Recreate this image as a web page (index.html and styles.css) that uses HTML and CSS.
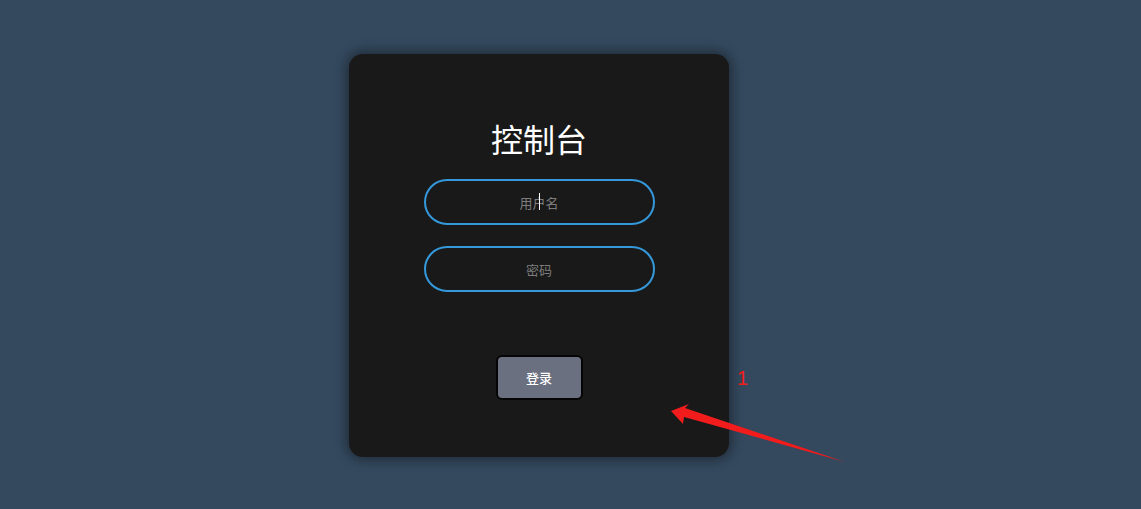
FILE: index.html
```html
<!DOCTYPE html>
<html lang="zh">
<head>
<meta charset="utf-8">
<title>控制台</title>
<link rel="stylesheet" href="styles.css">
</head>
<body>
<div class="page">
  <form class="card">
    <h1 class="title">控制台</h1>
    <div class="field">
      <input class="input" type="text" placeholder="用户名">
      <span class="caret"></span>
    </div>
    <div class="field">
      <input class="input" type="password" placeholder="密码">
    </div>
    <button class="btn" type="button">登录</button>
  </form>
  <span class="note">1</span>
  <svg class="arrow" width="200" height="80" viewBox="0 0 200 80">
    <polygon points="1,19 19,12 15,16 175,70 14,25 13,32" fill="#f21c1c"/>
  </svg>
</div>
</body>
</html>
```

FILE: styles.css
```css
html, body {
  margin: 0;
  padding: 0;
  height: 100%;
}
body {
  background: #34495e;
  font-family: "Noto Sans CJK SC", "Noto Sans", sans-serif;
  overflow: hidden;
}
.page {
  position: relative;
  height: 100%;
  padding: 54px 0 0 349px;
  box-sizing: border-box;
}
.card {
  width: 380px;
  height: 403px;
  box-sizing: border-box;
  background: #191919;
  border-radius: 14px;
  box-shadow: 0 0 12px 3px rgba(0, 0, 0, 0.4);
  display: flex;
  flex-direction: column;
  align-items: center;
  padding-top: 64px;
  margin: 0;
}
.title {
  margin: 0;
  color: #ffffff;
  font-size: 32px;
  line-height: 40px;
  font-weight: 400;
}
.field {
  position: relative;
  margin-top: 21px;
}
.field + .field {
  margin-top: 21px;
}
.input {
  display: block;
  width: 231px;
  height: 46px;
  box-sizing: border-box;
  border: 2px solid #3498db;
  border-radius: 24px;
  background: transparent;
  text-align: center;
  color: #ffffff;
  font-family: "Noto Sans CJK SC", "Noto Sans", sans-serif;
  font-size: 13px;
  outline: none;
}
.input::placeholder {
  color: #7d7d7d;
}
.caret {
  position: absolute;
  left: 115px;
  top: 14px;
  width: 1px;
  height: 17px;
  background: #ffffff;
}
.btn {
  margin-top: 63px;
  width: 87px;
  height: 45px;
  box-sizing: border-box;
  background: #6b7080;
  border: 2px solid #050505;
  border-radius: 6px;
  color: #ffffff;
  font-family: "Noto Sans CJK SC", "Noto Sans", sans-serif;
  font-size: 13px;
  font-weight: 500;
  cursor: pointer;
}
.note {
  position: absolute;
  left: 737px;
  top: 366px;
  color: #f21c1c;
  font-family: "Liberation Sans", sans-serif;
  font-size: 20px;
  line-height: 24px;
}
.arrow {
  position: absolute;
  left: 670px;
  top: 392px;
}
```
